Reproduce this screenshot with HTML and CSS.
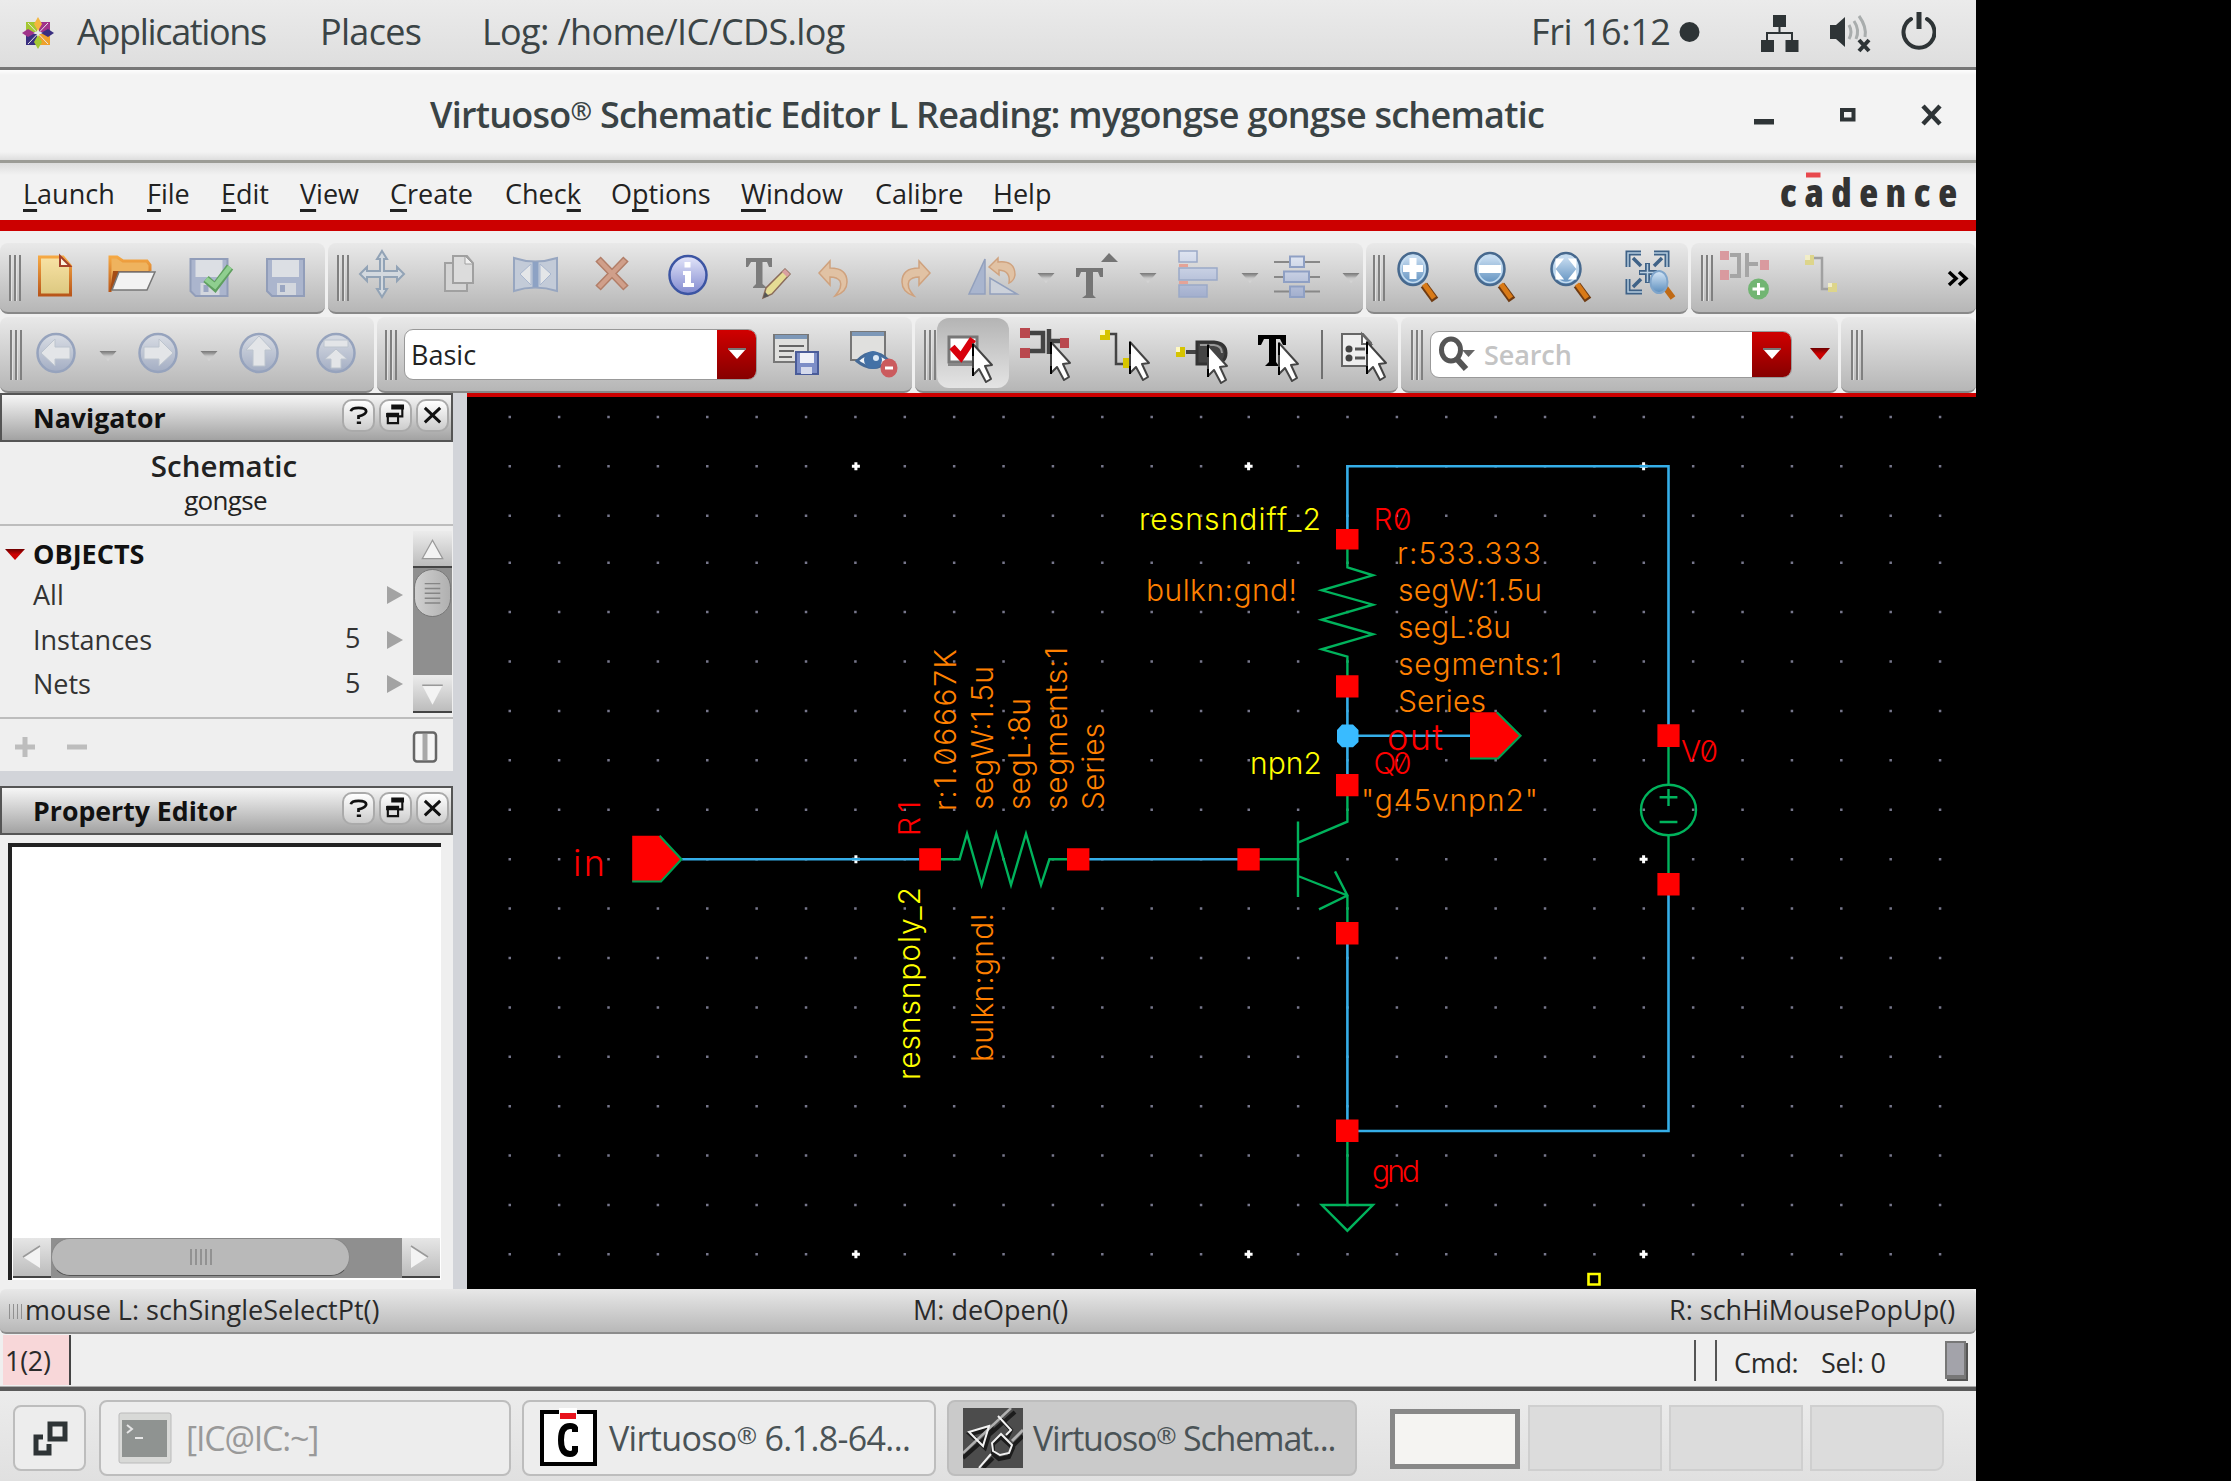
FILE: index.html
```html
<!DOCTYPE html>
<html lang="en">
<head>
<meta charset="utf-8">
<title>Virtuoso Schematic Editor</title>
<link rel="stylesheet" href="styles.css">
</head>
<body>
<svg class="defs" width="0" height="0">
  <defs>
    <linearGradient id="gOrange" x1="0" y1="0" x2="0" y2="1"><stop offset="0" stop-color="#f5a843"/><stop offset="1" stop-color="#b9561a"/></linearGradient>
    <linearGradient id="gPaper" x1="0" y1="0" x2="0" y2="1"><stop offset="0" stop-color="#f8e2a4"/><stop offset="1" stop-color="#dcc880"/></linearGradient>
    <linearGradient id="gBlue" x1="0" y1="0" x2="0" y2="1"><stop offset="0" stop-color="#d9dde4"/><stop offset="1" stop-color="#a3adc3"/></linearGradient>
    <linearGradient id="gInfo" x1="0" y1="0" x2="0" y2="1"><stop offset="0" stop-color="#e4e6fa"/><stop offset="1" stop-color="#8089cf"/></linearGradient>
    <linearGradient id="gLens" x1="0" y1="0" x2="0" y2="1"><stop offset="0" stop-color="#d7e8f8"/><stop offset="1" stop-color="#5b8dbd"/></linearGradient>
    <linearGradient id="gBar" x1="0" y1="0" x2="0" y2="1"><stop offset="0" stop-color="#dfe5f1"/><stop offset="1" stop-color="#a2aecd"/></linearGradient>
    <linearGradient id="gRedTri" x1="0" y1="0" x2="0" y2="1"><stop offset="0" stop-color="#6d0000"/><stop offset=".5" stop-color="#cc0000"/><stop offset="1" stop-color="#cc0000"/></linearGradient>
    <linearGradient id="gCaret" x1="0" y1="0" x2="0" y2="1"><stop offset="0" stop-color="#777"/><stop offset=".25" stop-color="#999"/><stop offset=".5" stop-color="#c8c8c8"/><stop offset="1" stop-color="#d8d8d8"/></linearGradient>
    <g id="cursor"><path d="M0 0V31L6 25 13 38 18 35 12 22 19 21Z" fill="#fff" stroke="#444" stroke-width="2" stroke-linejoin="round"/><path d="M0 0V12M0 24V32" stroke="#000" stroke-width="2"/></g>
    <g id="floppy"><path d="M1 1H38V38H6L1 33Z" fill="#abb5cd" stroke="#919db9" stroke-width="2"/><path d="M6 2H33V19H6Z" fill="#dcdfe4"/><path d="M11 25H30V37H11Z" fill="#d3d7de"/><path d="M14 27H19V34H14Z" fill="#9aa6c2"/></g>
    <g id="lens"><path d="M27 33 38 48" stroke="#6f3b12" stroke-width="8"/><path d="M27 32 37 46" stroke="#d97a17" stroke-width="5"/><ellipse cx="16" cy="17" rx="14.5" ry="16" fill="url(#gLens)" stroke="#47698e" stroke-width="2.5"/><ellipse cx="16" cy="17" rx="12" ry="13.5" fill="none" stroke="#c4dcf0" stroke-width="1.5"/></g>
    <g id="caret"><path d="M0 0H17L8.500 10Z" fill="url(#gCaret)"/></g>
    <g id="disc"><ellipse cx="32" cy="36" rx="18.500" ry="19" fill="url(#gBlue)" stroke="#96a3bd" stroke-width="2.500"/></g>
  </defs>
</svg>
<div class="desktop">

  <header class="topbar">
    <svg class="distro" width="34" height="34" viewBox="0 0 34 34">
      <path d="M5 6H16V16H5Z" fill="#a4c832"/><path d="M18 6H29V16H18Z" fill="#a0338a"/><path d="M5 18H16V29H5Z" fill="#3a2f80"/><path d="M18 18H29V29H18Z" fill="#efa02c"/>
      <path d="M17 1 21 8 17 15 13 8Z" fill="#f4b63e"/><path d="M17 33 21 26 17 19 13 26Z" fill="#a4c832"/><path d="M1 17 7 13 14 17 7 21Z" fill="#a0338a"/><path d="M33 17 27 13 20 17 27 21Z" fill="#3a2f80"/>
      <path d="M7 7 27 28M27 7 7 28" stroke="#e8e8e8" stroke-width="1"/>
    </svg>
    <span class="top-item apps">Applications</span>
    <span class="top-item places">Places</span>
    <span class="top-item log">Log: /home/IC/CDS.log</span>
    <span class="top-item clock">Fri 16:12</span>
    <svg class="tray" width="260" height="66" viewBox="1676 0 260 66">
      <ellipse cx="1689.500" cy="33" rx="10" ry="10" fill="#2e3436"/>
      <path d="M1773 16H1786V28H1773ZM1761 41H1774V53H1761ZM1785.500 41H1798.500V53H1785.500Z" fill="#2e3436"/>
      <path d="M1779.500 27V34M1767 42V34H1792V42" fill="none" stroke="#2e3436" stroke-width="2"/>
      <path d="M1830 26H1836L1845 18V48L1836 40H1830Z" fill="#2e3436"/>
      <path d="M1849 26Q1853 33 1849 40M1854 22Q1860 31 1856 40M1859 17Q1867 28 1865 38" fill="none" stroke="#a9adad" stroke-width="3"/>
      <path d="M1859 41 1869 52M1869 41 1859 52" stroke="#2e3436" stroke-width="4"/>
      <path d="M1911 20A15.500 15.500 0 1 0 1927 20" fill="none" stroke="#2e3436" stroke-width="4" stroke-linecap="round"/>
      <path d="M1919 13V30" stroke="#2e3436" stroke-width="5"/>
    </svg>
  </header>

  <div class="titlebar">
    <h1 class="title">Virtuoso<span class="reg">®</span> Schematic Editor L Reading: mygongse gongse schematic</h1>
    <svg class="win-ctl" width="190" height="30" viewBox="1752 100 190 30">
      <path d="M1754 119H1774V124.500H1754Z" fill="#2e3436"/>
      <path d="M1842 110H1853.500V119.500H1842Z" fill="none" stroke="#2e3436" stroke-width="4"/>
      <path d="M1923 106 1940 124M1940 106 1923 124" stroke="#2e3436" stroke-width="4.500"/>
    </svg>
  </div>

  <nav class="menubar">
    <span class="m m1"><u>L</u>aunch</span><span class="m m2"><u>F</u>ile</span><span class="m m3"><u>E</u>dit</span><span class="m m4"><u>V</u>iew</span><span class="m m5"><u>C</u>reate</span><span class="m m6">Chec<u>k</u></span><span class="m m7">O<u>p</u>tions</span><span class="m m8"><u>W</u>indow</span><span class="m m9">Cali<u>b</u>re</span><span class="m m10"><u>H</u>elp</span>
    <svg class="brand" width="180" height="50" viewBox="1778 170 180 50">
      <text x="1780" y="210" textLength="177" lengthAdjust="spacing" class="brand-text">cadence</text>
      <path d="M1806 175.500H1820.500V180.500H1806Z" fill="#e8484d"/>
    </svg>
  </nav>

  <div class="toolrows">
    <div class="row row1">
      <div class="group r1a"><i class="handle"></i>
        <svg class="ic" viewBox="0 0 64 70"><path d="M17.500 14H41L48.500 23V52H17.500Z" fill="url(#gPaper)" stroke="url(#gOrange)" stroke-width="3"/><path d="M38 13V23H48Z" fill="#fdf3e0" stroke="#a3402a" stroke-width="2"/></svg>
        <svg class="ic" viewBox="0 0 64 70"><path d="M11 49V14H18L24 18H48L51 22V28" fill="#efb35e" stroke="url(#gOrange)" stroke-width="3"/><path d="M11 48 14 28H52" fill="#a44d16"/><path d="M20 29H56L48 47H13Z" fill="#f3f3f3" stroke="#777" stroke-width="1.500"/></svg>
        <svg class="ic" viewBox="0 0 64 70"><use href="#floppy" x="14.500" y="15"/><path d="M31 36 40 44 55 24" fill="none" stroke="#5f9f5f" stroke-width="8"/><path d="M31 36 40 43 55 24" fill="none" stroke="#8fcf8f" stroke-width="5"/></svg>
        <svg class="ic" viewBox="0 0 64 70"><use href="#floppy" x="14" y="15"/></svg>
      </div>
      <div class="group r1b"><i class="handle"></i>
        <svg class="ic" viewBox="0 0 64 70"><path d="M32 8 37 16H34V28H47V24L54 31 47 38V34H34V46H37L32 54 27 46H30V34H17V38L10 31 17 24V28H30V16H27Z" fill="#d3d9df" stroke="#92a3b6" stroke-width="2"/></svg>
        <svg class="ic" viewBox="0 0 64 70"><path d="M18 20H40V48H18Z" fill="#d4d4d4" stroke="#a0a0a0" stroke-width="2"/><path d="M26 13H40L46 20V40H26Z" fill="#dcdcdc" stroke="#a0a0a0" stroke-width="2"/><path d="M38 13V21H46Z" fill="#f0f0f0" stroke="#a0a0a0" stroke-width="1"/></svg>
        <svg class="ic" viewBox="0 0 64 70"><path d="M11 15Q32 22 54 15V48Q32 41 11 48Z" fill="#c3cbd8" stroke="#97a6c0" stroke-width="2"/><path d="M28 21V42L17 31ZM37 21V42L48 31Z" fill="#e4e6e8" stroke="#a9b7cf"/><path d="M32.500 19V44" stroke="#8da2c4" stroke-width="6"/></svg>
        <svg class="ic" viewBox="0 0 64 70"><path d="M18 16 46 45M46 16 18 45" stroke="#b27e68" stroke-width="7.500"/><path d="M19 17 45 44M45 17 19 44" stroke="#d09f8a" stroke-width="4.500"/></svg>
        <svg class="ic" viewBox="0 0 64 70"><ellipse cx="32" cy="32" rx="18.500" ry="19" fill="url(#gInfo)" stroke="#3c55a3" stroke-width="2.500"/><path d="M28.500 19H34.500V24.500H28.500ZM27 28H35V40H38V44H27V40H29V32H27Z" fill="#fff"/></svg>
        <svg class="ic" viewBox="0 0 64 70"><path d="M13 15H39V24H36L34 19H29.500V41L33 44V45H20V44L23 41V19H18L15 24H13Z" fill="#7c7c7c"/><path d="M30 55 33 45 52 26 57 31 39 51Z" fill="#e5dc94" stroke="#8a6b5a" stroke-width="1.500"/><path d="M52 26 57 31 54 34 49 29Z" fill="#d9a0a0"/><path d="M30 55 32 49 36 53Z" fill="#555"/></svg>
        <svg class="ic" viewBox="0 0 64 70"><g transform="translate(-3)"><path d="M10 30 21 18V25Q38 25 38 39Q38 49 26 53Q34 44 31 38Q28 34 21 34V42Z" transform="translate(2 0)" fill="#e1c2a4" stroke="#cfa27e" stroke-width="1.500"/></g></svg>
        <svg class="ic" viewBox="0 0 64 70"><g transform="translate(3)"><path d="M41 30 30 18V25Q13 25 13 39Q13 49 25 53Q17 44 20 38Q23 34 30 34V42Z" fill="#e1c2a4" stroke="#cfa27e" stroke-width="1.500"/></g></svg>
        <svg class="ic" viewBox="0 0 64 70"><g transform="translate(-2)"><path d="M24 16V51H8Z" fill="#a9b5ce" stroke="#92a0bd" stroke-width="1.500"/><path d="M29 35V51H56Z" fill="#ccd1da" stroke="#92a0bd" stroke-width="1.500"/><path d="M28 24 37 15V19Q54 17 54 32Q53 38 48 40Q50 28 38 27V32Z" fill="#e1c2a4" stroke="#cfa27e" stroke-width="1.500"/></g></svg>
        <svg class="ct" viewBox="0 0 16 70"><use href="#caret" y="30"/></svg>
        <svg class="ic" viewBox="0 0 64 70"><path d="M16 25H43V34H40L38 29H33V52L36 55H22L26 52V29H21L19 34H16Z" fill="#757575"/><path d="M49 10 58 19H41Z" fill="#757575"/></svg>
        <svg class="ct" viewBox="0 0 16 70"><use href="#caret" y="30"/></svg>
        <svg class="ic" viewBox="0 0 64 70"><g fill="url(#gBar)" stroke="#9ba9c8" stroke-width="1.500"><path d="M17 8H35V19H17ZM17 25H55V37H17ZM17 42H45V54H17Z"/></g><path d="M17 21H26V24H17ZM17 38H26V41H17Z" fill="#e5a397"/></svg>
        <svg class="ct" viewBox="0 0 16 70"><use href="#caret" y="30"/></svg>
        <svg class="ic" viewBox="0 0 64 70"><path d="M10 19H56M10 34H56M10 48.500H56" stroke="#888" stroke-width="2"/><g fill="url(#gBar)" stroke="#8fa0c4" stroke-width="2"><path d="M26 13.500H40V24H26ZM20 28.500H45V39H20ZM26 43.500H40V54H26Z"/></g></svg>
        <svg class="ct" viewBox="0 0 16 70"><use href="#caret" y="30"/></svg>
      </div>
      <div class="group r1c"><i class="handle"></i>
        <svg class="ic" viewBox="0 0 64 70"><use href="#lens" x="11" y="9"/><path d="M23.500 15H30.500V22H37V29H30.500V36H23.500V29H17V22H23.500Z" fill="#fff"/></svg>
        <svg class="ic" viewBox="0 0 64 70"><use href="#lens" x="11" y="9"/><path d="M16 22H38V30H16Z" fill="#fff"/></svg>
        <svg class="ic" viewBox="0 0 64 70"><use href="#lens" x="11" y="9"/><path d="M18 22V17H22ZM32 17H36V22ZM18 30V35H22ZM36 30V35H32Z" fill="#fff" stroke="#fff" stroke-width="3"/></svg>
        <svg class="ic" viewBox="0 0 64 70"><path d="M12 24V10H25M12 36V49H26M38 10H51V24" fill="none" stroke="#3f6287" stroke-width="5"/><path d="M12 24V10H25M12 36V49H26M38 10H51V24" fill="none" stroke="#b7cde0" stroke-width="1.500"/><path d="M17 15 25 23M46 15 38 23M17 44 25 36" stroke="#3f6287" stroke-width="3.500"/><path d="M31.500 20V40M23 29.500H41" stroke="#3f6287" stroke-width="5"/><path d="M31.500 21V39M24 29.500H40" stroke="#b7cde0" stroke-width="1.500"/><path d="M48 43 57 55" stroke="#c06a15" stroke-width="6"/><ellipse cx="43" cy="39" rx="8.500" ry="11" fill="url(#gLens)" stroke="#7fa5cb" stroke-width="2"/></svg>
      </div>
      <div class="group r1d"><i class="handle"></i>
        <svg class="ic" viewBox="0 0 64 70"><path d="M16 12H25V33H16M33 10V34M33 21H44" fill="none" stroke="#a5a5a5" stroke-width="4"/><g fill="#d99a9f"><path d="M6 8H15V17H6ZM6 27H15V37H6ZM46 17H55V27H46Z"/></g><ellipse cx="44.500" cy="46" rx="10.500" ry="10.500" fill="#72b573"/><path d="M44.500 40V52M38.500 46H50.500" stroke="#fff" stroke-width="3"/></svg>
        <svg class="ic" viewBox="0 0 64 70"><path d="M21 15H31V46H40" fill="none" stroke="#a0a0a0" stroke-width="2.500"/><path d="M14 12H23V22H14ZM37 40H46V49H37Z" fill="#ddd58b"/><path d="M14 12H19V17H14ZM37 40H41V44H37Z" fill="#f2eec8"/></svg>
        <svg class="more" width="24" height="70" viewBox="0 0 24 70"><path d="M2 29 9 35.500 2 42M12 29 19 35.500 12 42" fill="none" stroke="#000" stroke-width="3.500"/></svg>
      </div>
    </div>

    <div class="row row2">
      <div class="group r2a"><i class="handle"></i>
        <svg class="ic n" viewBox="0 0 64 70"><use href="#disc"/><path d="M17 36 31 22V30H46V42H31V49Z" fill="#e3e5e8" stroke="#bcc4ce"/></svg>
        <svg class="ct" viewBox="0 0 16 70"><use href="#caret" y="34"/></svg>
        <svg class="ic n" viewBox="0 0 64 70"><use href="#disc"/><path d="M47 36 33 22V30H18V42H33V49Z" fill="#e3e5e8" stroke="#bcc4ce"/></svg>
        <svg class="ct" viewBox="0 0 16 70"><use href="#caret" y="34"/></svg>
        <svg class="ic n" viewBox="0 0 64 70"><use href="#disc"/><path d="M32 19 45 33H38V49H26V33H19Z" fill="#e3e5e8" stroke="#bcc4ce"/></svg>
        <svg class="ic" viewBox="0 0 64 70"><use href="#disc"/><path d="M20 23H44V30H20ZM32 32 43 42H37V51H27V42H21Z" fill="#e3e5e8" stroke="#bcc4ce"/></svg>
      </div>
      <div class="group r2b"><i class="handle"></i>
        <div class="combo"><span class="combo-text">Basic</span><span class="drop"><svg width="20" height="12" viewBox="0 0 20 12"><path d="M1 1H19L10 11Z" fill="#fff"/><path d="M1 1H19" stroke="#777" stroke-width="2"/></svg></span></div>
        <svg class="ic sv" viewBox="0 0 64 70"><path d="M10 18H44V45H10Z" fill="#e0e0de" stroke="#777" stroke-width="2"/><path d="M11 18H43V22H11Z" fill="#7d98b8"/><path d="M15 29H40M15 34H30M15 40H28" stroke="#666" stroke-width="2"/><path d="M32 35H54V57H32Z" fill="#7d8ec7" stroke="#4a5c99" stroke-width="2"/><path d="M36 36H50V46H36Z" fill="#eef0f8"/><path d="M37 50H48V57H37Z" fill="#d5daec"/></svg>
        <svg class="ic" viewBox="0 0 64 70"><path d="M10 15H44V43H10Z" fill="#e0e0de" stroke="#777" stroke-width="2"/><path d="M11 15H43V19H11Z" fill="#7d98b8"/><path d="M16 44Q32 28 48 44Q32 57 16 44Z" fill="#f0f4f8" stroke="#456a97" stroke-width="3"/><ellipse cx="32" cy="43" rx="9" ry="9" fill="#4371a6"/><circle cx="35" cy="41" r="3" fill="#dbe8f5"/><ellipse cx="48" cy="51" rx="8.500" ry="9.500" fill="#cb5b5e"/><path d="M44 51H52" stroke="#fff" stroke-width="3"/></svg>
      </div>
      <div class="group r2c"><i class="handle"></i>
        <div class="selected"><svg class="ic big" viewBox="0 0 64 70"><path d="M10 18H38V43H10Z" fill="#fff" stroke="#777" stroke-width="3"/><path d="M9 45.500H38" stroke="#888" stroke-width="3"/><path d="M13 28 22 38 34 20" fill="none" stroke="#d8000c" stroke-width="7"/><use href="#cursor" x="34" y="25"/></svg></div>
        <svg class="ic" viewBox="0 0 64 70"><path d="M14 16H27V34H14M33 12V37M34 24H45" fill="none" stroke="#444" stroke-width="4.500"/><g fill="#b9484e"><path d="M4 11H14V21H4ZM4 31H14V41H4ZM44 21H53V31H44Z"/></g><use href="#cursor" x="35" y="25"/></svg>
        <svg class="ic" viewBox="0 0 64 70"><path d="M16 17H22V47H30" fill="none" stroke="#444" stroke-width="2.500"/><path d="M6 13H16V23H6ZM29 41H38V51H29Z" fill="#d6c400"/><path d="M6 13H11V18H6Z" fill="#fff9c0"/><use href="#cursor" x="36" y="25"/></svg>
        <svg class="ic" viewBox="0 0 64 70"><path d="M14 35H26" stroke="#444" stroke-width="4"/><path d="M25 25H42Q54 26 54 36Q54 46 42 47H25Z" fill="#444" stroke="#333" stroke-width="3"/><path d="M28 28H42Q50 29 50 36" fill="none" stroke="#999" stroke-width="2"/><path d="M4 30H13V40H4Z" fill="#d6c400"/><path d="M4 30H8V35H4Z" fill="#fff9c0"/><use href="#cursor" x="36" y="28"/></svg>
        <svg class="ic" viewBox="0 0 64 70"><path d="M8 18H36V28H33L30 22H26V45L29 49H15L19 45V22H14L11 28H8Z" fill="#000"/><use href="#cursor" x="29" y="26"/></svg>
        <i class="vline"></i>
        <svg class="ic" viewBox="0 0 64 70"><path d="M11 17H32L40 26V49H11Z" fill="#eee" stroke="#666" stroke-width="2"/><path d="M31 17V27H40Z" fill="#fff" stroke="#666" stroke-width="2"/><circle cx="18" cy="32" r="3.500" fill="#444"/><circle cx="18" cy="41" r="3.500" fill="#444"/><path d="M24 32H34M24 41H34" stroke="#555" stroke-width="3"/><use href="#cursor" x="36" y="25"/></svg>
      </div>
      <div class="group r2d"><i class="handle"></i>
        <div class="combo search"><svg width="42" height="44" viewBox="0 0 42 44"><ellipse cx="16" cy="18" rx="9.500" ry="11" fill="none" stroke="#555" stroke-width="5"/><path d="M22 27 31 37" stroke="#555" stroke-width="6"/><path d="M27 18H40L33.500 25Z" fill="#666"/></svg><span class="ph">Search</span><span class="drop"><svg width="20" height="12" viewBox="0 0 20 12"><path d="M1 1H19L10 11Z" fill="#fff"/><path d="M1 1H19" stroke="#777" stroke-width="2"/></svg></span></div>
        <svg class="redtri" width="20" height="12" viewBox="0 0 20 12"><path d="M0 0H20L10 12Z" fill="url(#gRedTri)"/></svg>
      </div>
      <div class="group r2e"><i class="handle"></i></div>
    </div>
  </div>

  <div class="work">
    <aside class="side">
      <section class="dock">
        <div class="dock-title"><span>Navigator</span>
          <div class="btns"><b><svg viewBox="0 0 34 34"><path d="M8 12Q9 8 17 8Q26 8 26 12Q26 16 17 18V21M15 25.500H20" fill="none" stroke="#111" stroke-width="3.200"/></svg></b><b><svg viewBox="0 0 34 34"><path d="M13 6H25V18H21" fill="none" stroke="#111" stroke-width="2.500"/><path d="M12 4H27V10H12ZM6 14H21V19H6Z" fill="#111"/><path d="M8 15V26H20V15Z" fill="none" stroke="#111" stroke-width="2.500"/></svg></b><b><svg viewBox="0 0 34 34"><path d="M8 8 26 25M26 8 8 25" stroke="#111" stroke-width="3.500"/></svg></b></div>
        </div>
        <div class="nav-head"><div class="nh1">Schematic</div><div class="nh2">gongse</div></div>
        <div class="tree">
          <div class="tree-list">
            <div class="tr obj"><svg width="20" height="12" viewBox="0 0 20 12"><path d="M0 1H20L10 12Z" fill="url(#gRedTri)"/></svg><span class="nm">OBJECTS</span></div>
            <div class="tr"><span class="nm">All</span><span class="ct5"></span><svg class="arr" viewBox="0 0 16 18"><path d="M0 0V18L16 9Z" fill="#a3a3a3"/></svg></div>
            <div class="tr"><span class="nm">Instances</span><span class="ct5">5</span><svg class="arr" viewBox="0 0 16 18"><path d="M0 0V18L16 9Z" fill="#a3a3a3"/></svg></div>
            <div class="tr"><span class="nm">Nets</span><span class="ct5">5</span><svg class="arr" viewBox="0 0 16 18"><path d="M0 0V18L16 9Z" fill="#a3a3a3"/></svg></div>
          </div>
          <div class="vscroll"><div class="sb up"><svg viewBox="0 0 38 36"><path d="M9 27 19 9 29 27Z" fill="#f3f3f3" stroke="#999" stroke-width="1.200"/></svg></div><div class="vtrack"><div class="vthumb"><svg viewBox="0 0 36 48"><path d="M10 14H26M10 19H26M10 24H26M10 29H26M10 34H26" stroke="#858585" stroke-width="1.500"/></svg></div></div><div class="sb down"><svg viewBox="0 0 38 38"><path d="M9 10H29L19 29Z" fill="#f3f3f3"/><path d="M9 10H29" stroke="#999" stroke-width="1.500"/></svg></div></div>
        </div>
        <div class="nav-foot"><svg width="440" height="52" viewBox="0 0 440 52"><path d="M15 28H35M25 18V38M67 28H87" stroke="#bdbdbd" stroke-width="5"/><rect x="414" y="13.500" width="22" height="29" rx="3" fill="#f5f5f5" stroke="#666" stroke-width="2.500"/><path d="M425 15V41" stroke="#a8a8a8" stroke-width="5"/></svg></div>
      </section>
      <section class="dock prop">
        <div class="dock-title"><span>Property Editor</span>
          <div class="btns"><b><svg viewBox="0 0 34 34"><path d="M8 12Q9 8 17 8Q26 8 26 12Q26 16 17 18V21M15 25.500H20" fill="none" stroke="#111" stroke-width="3.200"/></svg></b><b><svg viewBox="0 0 34 34"><path d="M13 6H25V18H21" fill="none" stroke="#111" stroke-width="2.500"/><path d="M12 4H27V10H12ZM6 14H21V19H6Z" fill="#111"/><path d="M8 15V26H20V15Z" fill="none" stroke="#111" stroke-width="2.500"/></svg></b><b><svg viewBox="0 0 34 34"><path d="M8 8 26 25M26 8 8 25" stroke="#111" stroke-width="3.500"/></svg></b></div>
        </div>
        <div class="prop-box">
          <div class="hscroll"><div class="hb"><svg viewBox="0 0 38 40"><path d="M27 8V30L10 19Z" fill="#f3f3f3"/><path d="M10 19 27 8" stroke="#999" stroke-width="1.500"/></svg></div><div class="htrack"><div class="hthumb"><svg width="24" height="18" viewBox="0 0 24 18"><path d="M2 1V17M7 1V17M12 1V17M17 1V17M22 1V17" stroke="#858585" stroke-width="1.500"/></svg></div></div><div class="hb"><svg viewBox="0 0 38 40"><path d="M9 8V30L26 19Z" fill="#f3f3f3"/><path d="M9 8 26 19" stroke="#999" stroke-width="1.500"/></svg></div></div>
        </div>
      </section>
    </aside>

    <main class="canvas">
      <svg width="1509" height="892" viewBox="467 397 1509 892">
        <defs>
          <g id="dots"><path d="M508.500 0H1204M1247.500 0H1945" stroke="#77778c" stroke-width="2.500" stroke-dasharray="2.500 46.880"/></g>
          <path id="major" d="M-4 0H4M0 -4V4" stroke="#fff" stroke-width="3"/>
        </defs>
        <use href="#dots" y="416.900"/><use href="#dots" y="466.300"/><use href="#dots" y="515.700"/><use href="#dots" y="562.700"/><use href="#dots" y="612.100"/><use href="#dots" y="661.500"/><use href="#dots" y="711"/><use href="#dots" y="760.300"/><use href="#dots" y="809.700"/><use href="#dots" y="859.200"/><use href="#dots" y="908.600"/><use href="#dots" y="958"/><use href="#dots" y="1007.400"/><use href="#dots" y="1056.800"/><use href="#dots" y="1106.200"/><use href="#dots" y="1155.600"/><use href="#dots" y="1205"/><use href="#dots" y="1254.300"/>
        <use href="#major" x="855.900" y="466.300"/><use href="#major" x="1248.600" y="466.300"/><use href="#major" x="1643.600" y="466.300"/><use href="#major" x="855.900" y="859.300"/><use href="#major" x="1643.600" y="859.300"/><use href="#major" x="855.900" y="1254.300"/><use href="#major" x="1248.600" y="1254.300"/><use href="#major" x="1643.600" y="1254.300"/>

        <g class="wire">
          <path d="M1347.400 530V466.300H1668.500V725M1347.400 697V775M1347.400 735.700H1471M682 859.300H919M1089 859.300H1238M1347.400 944V1120M1347.400 1131H1668.500V895"/>
        </g>
        <g class="dev">
          <path d="M1347.400 549V567.300L1373 575.300 1321.700 590.300 1373 604.700 1321.700 619.700 1373 634.300 1321.700 649.300 1347.400 656.700V676"/>
          <path d="M941 859.300H959.600L967 833.700 981.600 885 996.300 833.700 1011 885 1026 833.700 1041 885 1049.400 859.300H1067"/>
          <path d="M1259 859.300H1298M1298 821.500V897M1298 842.700 1347.400 821.700V796M1298 876 1347.400 895.500V922M1335 871.400 1347.400 895.500 1319 909.300"/>
          <path d="M1668.500 747V785M1668.500 835V873M1659.600 797.300H1677.400M1668.500 789V806M1659.600 822H1677.400"/>
          <ellipse cx="1668.500" cy="810" rx="27.500" ry="25.200"/>
          <path d="M1347.400 1142V1205M1321.800 1205H1372.900L1347.400 1230.700Z"/>
        </g>
        <path d="M632.200 835.700H659.600L681.500 859.300 661 881.500H632.200Z" fill="#f00"/>
        <path d="M659.600 835.700 681.500 859.300 661 881.500H632.200" class="pinedge"/>
        <path d="M1470 712.300H1496.800L1520.500 735.700 1498 758.500H1470Z" fill="#f00"/>
        <path d="M1496.800 712.300 1520.500 735.700 1498 758.500H1470" class="pinedge"/>
        <g fill="#f00">
          <path d="M1336 529H1358.500V549.500H1336ZM1336 675.300H1358.500V697.500H1336ZM1336 774H1358.500V796.300H1336ZM1336 922H1358.500V944.500H1336ZM1336 1119.600H1358.500V1142H1336ZM1237.400 848.200H1259.700V870.400H1237.400ZM1657.400 724.300H1679.600V747H1657.400ZM1657.400 872.900H1679.600V895.400H1657.400ZM919.200 848.200H941V870.400H919.200ZM1067 848.200H1089.400V870.400H1067Z"/>
        </g>
        <path d="M1334 735.700H1337V730L1342 724.500H1353L1358.500 730V742L1353 747.300H1342L1337 742V735.700" fill="#39bbff"/>
        <path d="M1588.500 1274H1599.500V1284.500H1588.500Z" fill="none" stroke="#ff0" stroke-width="2.600"/>

        <g class="lbl yel">
          <text x="1139" y="529.500" textLength="182">resnsndiff_2</text>
          <text x="1250" y="774" textLength="72">npn2</text>
          <text transform="translate(919.500 1080) rotate(-90)" textLength="193">resnsnpoly_2</text>
        </g>
        <g class="lbl red">
          <text x="1373.500" y="529.500" textLength="38">R0</text>
          <text x="1373.500" y="774" textLength="38">Q0</text>
          <text x="1681" y="762" textLength="37">V0</text>
          <text x="1372" y="1181.500" textLength="48">gnd</text>
          <text x="1387" y="749.500" textLength="56" class="pin">out</text>
          <text x="573" y="876" textLength="32" class="pin">in</text>
          <text transform="translate(919.500 836) rotate(-90)" textLength="35">R1</text>
        </g>
        <g class="lbl org">
          <text x="1397" y="564" textLength="144">r:533.333</text>
          <text x="1398" y="601.300" textLength="144">segW:1.5u</text>
          <text x="1398" y="638.300" textLength="113">segL:8u</text>
          <text x="1398" y="675.300" textLength="164">segments:1</text>
          <text x="1398" y="712" textLength="88">Series</text>
          <text x="1146" y="601.300" textLength="151">bulkn:gnd!</text>
          <text x="1361" y="810.700" textLength="177">"g45vnpn2"</text>
          <text transform="translate(956 811) rotate(-90)" textLength="162">r:1.06667K</text>
          <text transform="translate(993 810) rotate(-90)" textLength="144">segW:1.5u</text>
          <text transform="translate(1030 810) rotate(-90)" textLength="112">segL:8u</text>
          <text transform="translate(1067.300 810) rotate(-90)" textLength="163">segments:1</text>
          <text transform="translate(1104 810) rotate(-90)" textLength="87">Series</text>
          <text transform="translate(993 1062) rotate(-90)" textLength="149">bulkn:gnd!</text>
        </g>
      </svg>
    </main>
  </div>

  <div class="mousebar"><i class="tiny"></i><span class="ml">mouse L: schSingleSelectPt()</span><span class="mm">M: deOpen()</span><span class="mr">R: schHiMousePopUp()</span></div>
  <div class="statusbar"><span class="pink">1(2)</span><i class="sl"></i><i class="sl s2"></i><span class="cmd">Cmd:</span><span class="sel">Sel: 0</span><i class="grip"></i></div>

  <footer class="taskbar">
    <div class="tbtn show"><svg width="36" height="36" viewBox="0 0 36 36"><path d="M18 4H33V19H18Z" fill="none" stroke="#2e3436" stroke-width="5"/><path d="M11 17H4V33H17V24" fill="none" stroke="#2e3436" stroke-width="5"/></svg></div>
    <div class="tbtn task term"><svg width="54" height="56" viewBox="0 0 54 56"><rect x="1" y="3" width="52" height="50" rx="2" fill="#d8d9d7" stroke="#bbb"/><path d="M4 10H49V47H4Z" fill="#8f9391"/><path d="M9 15 14 19 9 23M17 28H25" fill="none" stroke="#e6e6e6" stroke-width="2"/></svg><span>[IC@IC:~]</span></div>
    <div class="tbtn task virt"><svg width="57" height="60" viewBox="0 0 57 60"><path d="M2 4H55V56H2Z" fill="#fff" stroke="#000" stroke-width="4"/><path d="M19 0H37V7H19Z" fill="#fff"/><path d="M20 5H36V11H20Z" fill="#e8121c"/><path d="M35 24V20Q34 18 30 18Q21 18 21 32Q21 46 30 46Q34 46 35 43V38" fill="none" stroke="#000" stroke-width="6"/></svg><span>Virtuoso<span class="reg">®</span> 6.1.8-64...</span></div>
    <div class="tbtn task active"><svg width="60" height="60" viewBox="0 0 60 60"><path d="M0 0H60V60H0Z" fill="#4c4c4c"/><path d="M0 50 52 4M7 26 28 21 22 40ZM36 9 48 22 44 30M38 29 30 36V46L36 51 46 49 50 40ZM50 38 60 28M30 50 20 60" fill="none" stroke="#1c1c1c" stroke-width="4"/><path d="M0 45 48 0" fill="none" stroke="#b0b0b0" stroke-width="2.500"/><path d="M6 24 26 18 20 38ZM35 8 48 22 43 27M38 26 29 35 30 43 37 47 46 45 49 37ZM28 46 16 60" fill="none" stroke="#f2f2f2" stroke-width="2"/><path d="M49 33 60 22" stroke="#b0b0b0" stroke-width="3"/></svg><span>Virtuoso<span class="reg">®</span> Schemat...</span></div>
    <div class="pager"><i class="pg cur"></i><i class="pg"></i><i class="pg"></i><i class="pg last"></i></div>
  </footer>
</div>
</body>
</html>
```
FILE: styles.css
```css
* { box-sizing: border-box; }
html, body { margin: 0; background: #000; }
body { width: 2231px; height: 1481px; overflow: hidden; font-family: "Open Sans", "Noto Sans", sans-serif; color: #222; }
.defs { position: absolute; }
.desktop { width: 1976px; height: 1481px; display: flex; flex-direction: column; background: #efefef; }
span { white-space: nowrap; }
svg { display: block; flex: none; }

.topbar { height: 70px; flex: none; display: flex; align-items: center; padding-bottom: 4px; background: linear-gradient(#ebebeb, #dedede); border-bottom: 3px solid #777; font-size: 36px; color: #3b4446; }
.distro { margin: 2px 0 0 21px; }
.top-item { flex: none; }
.apps { margin-left: 22px; width: 243px; letter-spacing: -1.35px; }
.places { width: 162px; letter-spacing: -.7px; }
.log { width: 1049px; letter-spacing: -.67px; }
.clock { width: 145px; letter-spacing: -.45px; }

.titlebar { height: 90px; flex: none; display: flex; align-items: center; background: linear-gradient(#fdfdfd, #f3f3f3 5px, #f3f3f3 82px, #dedede); }
.title { margin: 0 0 0 430px; width: 1322px; font-size: 36px; font-weight: 600; color: #3a4345; white-space: nowrap; line-height: 44px; letter-spacing: -.76px; }
.reg { font-size: .72em; position: relative; top: -.3em; line-height: 1; }
.win-ctl { margin-top: -1px; }

.menubar { height: 60px; flex: none; display: flex; align-items: center; border-top: 3px solid #9c9c96; padding: 3px 0 0 23px; background: linear-gradient(#dcdcdc, #f2f2f2 12px); font-size: 27px; }
.menubar u { text-decoration-thickness: 3px; text-underline-offset: 5px; text-decoration-skip-ink: none; }
.m { flex: none; }
.m1 { width: 124px; } .m2 { width: 74px; } .m3 { width: 79px; } .m4 { width: 90px; } .m5 { width: 115px; } .m6 { width: 106px; } .m7 { width: 130px; } .m8 { width: 134px; } .m9 { width: 118px; } .m10 { width: 785px; }
.brand { margin-top: -2px; }
.brand-text { font-family: "Open Sans"; font-weight: 800; font-size: 39px; font-stretch: 75%; fill: #333; }

.toolrows { height: 173px; flex: none; border-top: 11px solid #c00; padding-top: 12px; display: flex; flex-direction: column; gap: 3px; background: #f0f0f0; }
.row { display: flex; gap: 3px; }
.group { display: flex; align-items: center; padding-left: 10px; border-radius: 8px; background: linear-gradient(#e9e9e9, #b6b6b6); border-bottom: 2px solid #888; flex: none; }
.row1 { height: 71px; } .row2 { height: 77px; }
.row1 .group { align-items: flex-start; }
.handle { width: 12px; height: 46px; flex: none; margin-right: 1px; background: repeating-linear-gradient(90deg, #808080 0 2px, #e2e2e2 2px 3px, transparent 3px 5px); }
.row1 .handle { margin-top: 12px; }
.row2 .handle { height: 50px; margin-top: 1px; }
.ic { width: 64px; height: 70px; margin-right: 12.6px; }
.ct { width: 17px; height: 70px; margin: 0 10.1px 0 -2px; overflow: visible; }
.r1a { width: 325px; padding-left: 9px; } .r1b { width: 1035px; padding-left: 9px; } .r1c { width: 322px; padding-left: 7px; } .r1d { width: 285px; }
.r1b .ct + .ic { margin-left: -4px; margin-right: 16.6px; }
.more { margin-left: 80px; }
.r2a { width: 374px; } .r2b { width: 535px; } .r2c { width: 483px; } .r2d { width: 437px; } .r2e { width: 135px; }
.row2 .ic, .row2 .ct { align-self: flex-start; }
.r2a .handle { margin-right: 2px; }
.r2b { padding-left: 8px; }
.combo { height: 51px; width: 353px; margin: 0 0 0 6px; background: #fff; border: 1px solid #999; border-radius: 9px; display: flex; align-items: center; overflow: hidden; flex: none; }
.combo-text { flex: 1; padding-left: 6px; font-size: 27px; color: #222; }
.drop { width: 39px; height: 100%; background: linear-gradient(#d00000, #860000); display: flex; align-items: center; justify-content: center; flex: none; }
.sv { margin-left: 7px; }
.r2c { padding-left: 9px; }
.r2c .ic { margin-right: 14px; flex: none; }
.selected { width: 72px; height: 70px; margin-top: -2px; border-radius: 12px; background: linear-gradient(#b4b4b4, #e4e4e4); flex: none; }
.selected + .ic { margin-left: 7px; }
.selected .big { margin: 1px 0 0 2px; }
.vline { width: 2px; height: 49px; flex: none; background: #707070; margin: 0 8px 0 -7px; }
.search { width: 362px; height: 47px; margin-left: 6px; }
.search svg { margin-left: 4px; }
.search .drop svg { margin: 0; }
.ph { flex: 1; font-size: 27px; font-weight: 600; color: #c4c4c4; padding-left: 7px; letter-spacing: -.1px; }
.redtri { margin-left: 18px; }

.work { height: 896px; flex: none; display: flex; background: #d2d4d9; }
.side { width: 453px; display: flex; flex-direction: column; gap: 15px; }
.dock { background: #efefef; display: flex; flex-direction: column; }
.dock-title { height: 49px; flex: none; border: 2px solid #555; display: flex; align-items: center; justify-content: space-between; padding: 0 2px 0 31px; background: linear-gradient(#f6f6f6, #a2a2a2); font-size: 26.7px; font-weight: 700; color: #111; }
.btns { display: flex; gap: 4px; margin-top: -4px; }
.btns b { width: 33px; height: 33px; border-radius: 10px; border: 2px solid #aaa; background: linear-gradient(#fff, #ccc); }
.btns svg { width: 29px; height: 29px; }
.nav-head { height: 84px; flex: none; border-bottom: 2px solid #bdbdbd; text-align: center; color: #222; padding: 9px 5px 0 0; }
.nh1 { font-size: 29.5px; font-weight: 600; line-height: 40px; margin-top: -5px; }
.nh2 { font-size: 26px; line-height: 28px; letter-spacing: -.7px; padding-left: 3px; }
.tree { height: 193px; flex: none; display: flex; border-bottom: 2px solid #bdbdbd; }
.tree-list { width: 413px; padding-top: 4px; }
.tr { height: 44.5px; display: flex; align-items: center; padding-left: 33px; font-size: 27px; color: #333; line-height: 36px; padding-bottom: 3px; }
.obj { font-weight: 700; color: #111; padding: 3px 0 0 5px; }
.obj svg { margin-right: 8px; }
.tr .nm { flex: 1; }
.ct5 { width: 42px; margin-top: -3px; }
.arr { width: 16px; height: 18px; margin-right: 10px; }
.vscroll { width: 39px; margin: 5px 0 4px; display: flex; flex-direction: column; }
.sb { background: linear-gradient(#ececec, #bcbcbc); border-bottom: 2px solid #444; flex: none; }
.up { height: 37px; } .down { height: 38px; }
.vtrack { flex: 1; background: #8f8f8f; padding: 1px; }
.vthumb { height: 48px; border-radius: 19px; background: linear-gradient(90deg, #d0d0d0, #b0b0b0); border: 1px solid #777; }
.nav-foot { height: 52px; }
.prop { flex: 1; padding-bottom: 9px; }
.prop-box { margin: 8px 12px 0 8px; flex: 1; background: #fff; border: solid #222; border-width: 4px 0 0 4px; display: flex; flex-direction: column; justify-content: flex-end; padding: 0 1px 2px 1px; }
.hscroll { height: 40px; display: flex; }
.hb { width: 38px; background: linear-gradient(#e6e6e6, #bcbcbc); border-bottom: 2px solid #444; }
.htrack { flex: 1; background: #8f8f8f; }
.hthumb { width: 299px; height: 38px; border-radius: 19px; background: #b9b9b9; border: 1px solid #888; border-bottom-color: #555; display: flex; align-items: center; justify-content: center; }
.canvas { margin-left: 14px; width: 1509px; background: #000; border-top: 4px solid #c00; overflow: hidden; }

.wire { fill: none; stroke: #35aee8; stroke-width: 2.6; }
.dev { fill: none; stroke: #00b35c; stroke-width: 2.4; }
.pinedge { fill: none; stroke: #00a050; stroke-width: 2.2; }
.lbl { font-family: Inter, sans-serif; font-weight: 300; font-size: 30px; font-feature-settings: "zero" 1; }
.lbl .pin { font-size: 36px; }
.yel { fill: #ff0; } .red { fill: #f00; } .org { fill: #ff8000; }

.mousebar { height: 45px; flex: none; display: flex; align-items: center; background: linear-gradient(#e8e8e8, #b8b8b8); border-bottom: 2px solid #8c8c8c; font-size: 27px; color: #2a2a2a; border-radius: 6px; line-height: 36px; padding-bottom: 1px; }
.tiny { width: 13px; height: 15px; margin: 2px 3px 0 9px; background: repeating-linear-gradient(90deg, #909090 0 1.5px, transparent 1.5px 4px); }
.ml { width: 888px; } .mm { width: 756px; }
.statusbar { height: 53px; flex: none; display: flex; align-items: center; background: #efefef; border-bottom: 1px solid #aaa; font-size: 27px; color: #2a2a2a; }
.pink { width: 68px; height: 50px; line-height: 51px; margin-left: 3px; padding-left: 2px; background: #f8d7d9; border-right: 2px solid #444; flex: none; letter-spacing: -.3px; }
.sl { width: 2px; height: 41px; background: #555; margin-left: 1623px; flex: none; }
.s2 { margin-left: 19px; }
.cmd { margin-left: 17px; width: 87px; flex: none; padding-top: 4px; letter-spacing: -.3px; }
.sel { width: 124px; flex: none; padding-top: 4px; letter-spacing: -.3px; }
.grip { width: 21px; height: 38px; background: #a3a3aa; border: solid #777; border-width: 2px 2px 4px; box-shadow: 2px 2px 0 #555; }

.taskbar { flex: 1; display: flex; align-items: center; border-top: 4px solid #5a5a5a; background: linear-gradient(#ececec, #e0e0e0); font-size: 34px; color: #4a5356; padding: 3px 0 0 13px; }
.tbtn { border: 2px solid #bdbdbd; border-radius: 8px; background: #ededed; display: flex; align-items: center; flex: none; }
.show { width: 73px; height: 66px; justify-content: center; margin-right: 13px; }
.task { width: 414px; height: 76px; padding-left: 16px; gap: 12px; margin-right: 11px; }
.task > span { padding-top: 1px; }
.virt { letter-spacing: -.65px; }
.term { width: 412px; padding-left: 17px; gap: 14px; color: #999; letter-spacing: -1.2px; }
.active { width: 410px; background: #cacaca; padding-left: 14px; gap: 10px; letter-spacing: -1.2px; }
.pager { display: flex; gap: 7px; margin-left: 22px; }
.pg { width: 134px; height: 66px; background: #dcdcdc; border: 2px solid #cfcfcf; }
.cur { width: 130px; background: #f5f4f2; border: 5px solid #888; margin: 4px 1px 0 0; height: 60px; }
.last { border-radius: 0 9px 9px 0; }
```
